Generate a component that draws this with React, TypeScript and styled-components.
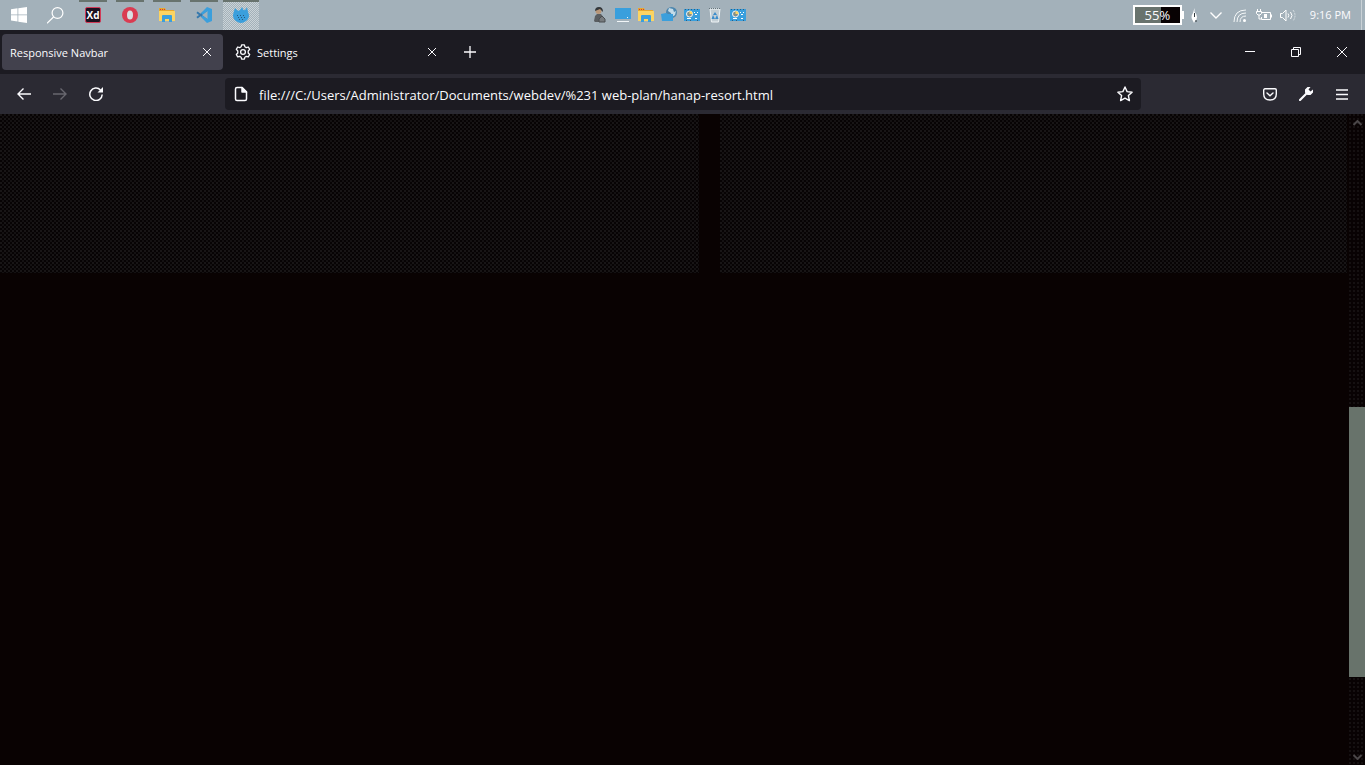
import React from "react";
import styled, { createGlobalStyle, css } from "styled-components";

const GlobalStyle = createGlobalStyle`
  *, *::before, *::after { box-sizing: border-box; }
  html, body { margin: 0; background: #090202; }
  body { font-family: "Open Sans", "Noto Sans", sans-serif; color: #fbfbfe; font-size: 11px; overflow: hidden; }
  button, input { font: inherit; color: inherit; border: 0; padding: 0; margin: 0; background: transparent; }
  svg { display: block; flex: none; }
`;

const Screen = styled.div`
  min-height: 100vh;
  display: flex;
  flex-direction: column;
`;

const Taskbar = styled.header`
  height: 30px;
  display: grid;
  grid-template-columns: 1fr auto 1fr;
  background: #a3b1ba;
`;

const PinnedApps = styled.nav`
  display: flex;
  gap: 1px;
  padding-left: 1px;
`;

const runningMark = "linear-gradient(#68736e, #68736e) center top";
const activeDither = "repeating-conic-gradient(#cbd3d7 0 25%, #a3b1ba 0 50%) 0 0 / 2px 2px";

const AppButton = styled.button<{ $running?: boolean; $active?: boolean }>`
  width: 36px;
  height: 30px;
  display: flex;
  align-items: center;
  justify-content: center;
  ${(p) =>
    p.$running &&
    css`
      background: ${runningMark} / ${p.$active ? "36px" : "28px"} 2px no-repeat
        ${p.$active ? `, ${activeDither}` : ""};
    `}
`;

const XdBadge = styled.span`
  width: 16px;
  height: 16px;
  border: 1px solid #d13b58;
  border-radius: 2px;
  background: #1b1220;
  color: #fff;
  font: bold 10px/14px "Open Sans", sans-serif;
  text-align: center;
`;

const Shortcuts = styled.div`
  display: flex;
  align-items: center;
  gap: 7px;
  margin-right: 28px;
`;

const ShortcutButton = styled.button`
  width: 16px;
  height: 16px;
`;

const Tray = styled.div`
  display: flex;
  align-items: center;
  justify-content: flex-end;
  padding-right: 3px;
`;

const BatteryMeter = styled.div`
  width: 49px;
  height: 20px;
  border: 2px solid #fff;
  outline: 0;
  background: linear-gradient(90deg, #68736e 58%, #080203 58%);
  font-size: 13px;
  line-height: 16px;
  text-align: center;
`;

const BatteryCap = styled.span`
  width: 2px;
  height: 8px;
  background: #fff;
`;

const TrayButton = styled.button<{ $wide?: boolean }>`
  width: ${(p) => (p.$wide ? 24 : 20)}px;
  height: 30px;
  display: flex;
  align-items: center;
  justify-content: center;
`;

const Clock = styled.time`
  padding: 0 10px;
  border-right: 1px solid #c9d1d6;
  line-height: 30px;
  white-space: nowrap;
`;

const TabStrip = styled.div`
  height: 44px;
  display: flex;
  align-items: center;
  padding-left: 2px;
  background: #1c1b22;
`;

const Tab = styled.div<{ $active?: boolean }>`
  width: 221px;
  height: 36px;
  margin-right: 4px;
  padding: 0 8px;
  display: flex;
  align-items: center;
  border-radius: 4px;
  background: ${(p) => (p.$active ? "#42414d" : "transparent")};
`;

const TabTitle = styled.button`
  flex: 1;
  display: flex;
  align-items: center;
  gap: 6px;
  text-align: left;
`;

const TabLabel = styled.span`
  padding-top: 2px;
  line-height: 20px;
`;

const TabClose = styled.button`
  width: 16px;
  height: 16px;
  display: flex;
  align-items: center;
  justify-content: center;
`;

const IconButton = styled.button`
  width: 36px;
  height: 32px;
  display: flex;
  align-items: center;
  justify-content: center;
  &:disabled { color: #68676f; }
`;

const WindowControls = styled.div`
  display: flex;
  margin-left: auto;
`;

const WindowButton = styled.button`
  width: 46px;
  height: 44px;
  display: flex;
  align-items: center;
  justify-content: center;
`;

const Toolbar = styled.div`
  height: 40px;
  display: flex;
  align-items: center;
  padding: 0 5px 0 6px;
  background: #2b2a33;
`;

const AddressBar = styled.label`
  flex: 1;
  height: 32px;
  margin: 0 111px;
  padding: 0 8px;
  display: flex;
  align-items: center;
  gap: 10px;
  border-radius: 4px;
  background: #1c1b22;
`;

const AddressInput = styled.input`
  flex: 1;
  min-width: 0;
  height: 24px;
  padding-top: 1px;
  font-size: 13px;
  outline: 0;
`;

const Viewport = styled.main`
  flex: 1;
  display: flex;
`;

const PageArea = styled.div`
  flex: 1;
  display: grid;
  grid-template-columns: 699fr 627fr;
  gap: 21px;
  align-items: start;
  padding-right: 2px;
`;

const Panel = styled.section`
  height: 159px;
  background:
    linear-gradient(#181516, #181516) 0 0 / 0 0 no-repeat,
    radial-gradient(circle at 1px 1px, #181516 0 1px, transparent 1px) 0 0 / 4px 4px,
    radial-gradient(circle at 1px 1px, #141112 0 1px, transparent 1px) 2px 2px / 4px 4px
    #070304;
`;

const Scrollbar = styled.div`
  width: 16px;
  display: flex;
  flex-direction: column;
  background: radial-gradient(circle at 1px 1px, #151011 0 1px, transparent 1px) 0 0 / 4px 4px #080203;
`;

const ScrollArrow = styled.button`
  width: 16px;
  height: 17px;
  display: flex;
  align-items: center;
  justify-content: center;
  color: #4a4648;
`;

const ScrollSpace = styled.div<{ $share: number }>`
  flex: ${(p) => p.$share} 0 0;
`;

const ScrollThumb = styled(ScrollSpace)`
  background: #68736b;
`;

const CloseIcon = ({ size = 8 }: { size?: number }) => (
  <svg width={size} height={size} viewBox="0 0 8 8" fill="none" stroke="currentColor" strokeWidth={size > 8 ? 0.8 : 1}>
    <path d="M0 0l8 8M8 0L0 8" />
  </svg>
);

const FolderIcon = () => (
  <svg width="16" height="16" viewBox="0 0 16 16">
    <path d="M0 1h6l1 2h8v10H0z" fill="#e6a82d" />
    <path d="M0 4h16v10H0z" fill="#fcd462" />
    <path d="M1 2h1v1H1zM3 2h1v1H3zM5 2h1v1H5z" fill="#d13b38" />
    <path d="M3 15V9q0-1 1-1h8q1 0 1 1v6h-3v-3H6v3z" fill="#3b9fdc" />
  </svg>
);

const ControlPanelIcon = () => (
  <svg width="16" height="16" viewBox="0 0 16 16">
    <path d="M0 2h16v12H0z" fill="#399fdd" />
    <circle cx="5.5" cy="7" r="3" fill="#81908b" stroke="#f2f6f8" />
    <path d="M5.500 4v3h3A3 3 0 0 0 5.500 4" fill="#fcd462" />
    <path d="M10 5h1v1h-1zM13 5h1v1h-1zM11 7h2v1h-2zM3 11h4v1H3zM11 11h2v1h-2z" fill="#fff" />
    <path d="M1 2h1v1H1zM4 2h1v1H4zM7 2h1v1H7zM10 2h1v1h-1zM13 2h1v1h-1zM2 13h1v1H2zM6 13h1v1H6zM13 13h1v1h-1z" fill="#2f5f82" />
  </svg>
);

const App = () => (
  <>
    <GlobalStyle />
    <Screen>
      <Taskbar>
        <PinnedApps aria-label="Taskbar">
          <AppButton aria-label="Start">
            <svg width="16" height="16" viewBox="0 0 16 16" fill="#fff">
              <path d="M0 2.200l6.500-.9v6.200H0zM7.300 1.200L16 0v7.500H7.300zM0 8.300h6.500v6.200L0 13.600zM7.300 8.300H16V16l-8.700-1.300z" />
            </svg>
          </AppButton>
          <AppButton aria-label="Search">
            <svg width="18" height="18" viewBox="0 0 18 18" fill="none" stroke="#fff" strokeWidth="1.200">
              <circle cx="10.500" cy="7" r="5.400" />
              <path d="M6.500 11L0 17.300" />
            </svg>
          </AppButton>
          <AppButton $running aria-label="Adobe XD">
            <XdBadge>Xd</XdBadge>
          </AppButton>
          <AppButton $running aria-label="Opera">
            <svg width="16" height="16" viewBox="0 0 16 16">
              <circle cx="8" cy="8" r="8" fill="#da3b51" />
              <ellipse cx="8" cy="8" rx="3" ry="4.500" fill="#d9dfe3" />
            </svg>
          </AppButton>
          <AppButton $running aria-label="File Explorer">
            <FolderIcon />
          </AppButton>
          <AppButton $running aria-label="Visual Studio Code">
            <svg width="16" height="16" viewBox="0 0 16 16" fill="none">
              <path d="M1 5.300l10.500 8.200M1 10.700L11.500 2.500" stroke="#3478ad" strokeWidth="2" />
              <path d="M11 0l5 2v12l-5 2-6-6 1.500-1.500L11.500 12V4L6.500 7.800 5 6z" fill="#3b9fdc" />
            </svg>
          </AppButton>
          <AppButton $running $active aria-label="Firefox">
            <svg width="16" height="16" viewBox="0 0 16 16">
              <path d="M1 4l1-3 2.500 2.500Q6 4 7 3L9 0l1.500 3q1.500.5 2.500-1l1-2 1 5 1 3q0 4-3 6-5 4-10 0Q0 12 0 8z" fill="#3b9fdc" />
              <path d="M4 8h1v1H4zM7 8h1v1H7zM10 8h1v1h-1zM5 10h1v1H5zM8 10h1v1H8zM11 10h1v1h-1zM6 12h1v1H6zM9 12h1v1H9z" fill="#27577c" />
            </svg>
          </AppButton>
        </PinnedApps>

        <Shortcuts>
          <ShortcutButton aria-label="User folder">
            <svg width="16" height="16" viewBox="0 0 16 16">
              <path d="M2 14l1-5 2-2h4l3 4v4H3z" fill="#5a5e61" />
              <circle cx="6.500" cy="4" r="3" fill="#b89678" />
              <path d="M3 4q0-4 4-4t4 5L8 2z" fill="#34383b" />
              <path d="M7 12l3-3 3 3v3H7z" fill="#777b7e" stroke="#4b4e51" />
            </svg>
          </ShortcutButton>
          <ShortcutButton aria-label="This PC">
            <svg width="16" height="16" viewBox="0 0 16 16">
              <path d="M0 1h16v11H0z" fill="#399fdd" />
              <path d="M2 14h12v1H2zM12 10h1v1h-1z" fill="#f2f6f8" />
            </svg>
          </ShortcutButton>
          <ShortcutButton aria-label="Libraries">
            <FolderIcon />
          </ShortcutButton>
          <ShortcutButton aria-label="Network">
            <svg width="16" height="16" viewBox="0 0 16 16">
              <circle cx="10.500" cy="5.500" r="5.500" fill="#4c86ae" />
              <path d="M8 1l4 1 1 3 2-1-1 4-3 2-1-4-3-2z" fill="#c3dbe8" />
              <path d="M0 7l5-1 2 1h5v7H1z" fill="#3b9fdc" />
            </svg>
          </ShortcutButton>
          <ShortcutButton aria-label="Control Panel">
            <ControlPanelIcon />
          </ShortcutButton>
          <ShortcutButton aria-label="Recycle Bin">
            <svg width="16" height="16" viewBox="0 0 16 16">
              <path d="M3 2h10l-1.500 13h-7z" fill="#c3ced4" stroke="#edf2f4" />
              <path d="M2 1.500h12" stroke="#65747b" strokeDasharray="1 1" />
              <path d="M8 5l2 3H6zM4.500 12l1.500-4 2 4zM11.500 12L10 8l-2 4z" fill="#3b8dcc" />
            </svg>
          </ShortcutButton>
          <ShortcutButton aria-label="System settings">
            <ControlPanelIcon />
          </ShortcutButton>
        </Shortcuts>

        <Tray>
          <BatteryMeter>55%</BatteryMeter>
          <BatteryCap />
          <TrayButton aria-label="Power plan">
            <svg width="6" height="15" viewBox="0 0 6 15">
              <path d="M3.500 0v4Q6 6 6 9q0 3-2 4l-1 2-1-2Q-1 9 2 5z" fill="#fff" />
              <path d="M3.500 5v4M5 12v2" stroke="#30383d" />
            </svg>
          </TrayButton>
          <TrayButton $wide aria-label="Hidden icons">
            <svg width="12" height="7" viewBox="0 0 12 7" fill="none" stroke="#fff" strokeWidth="1.400">
              <path d="M.5.5L6 6 11.500.5" />
            </svg>
          </TrayButton>
          <TrayButton $wide aria-label="Wi-Fi">
            <svg width="13" height="13" viewBox="0 0 13 13" fill="none" stroke="#f4f7f8">
              <path d="M1 13Q1 1 13 1M4 13Q4 4 13 4M7 13Q7 7 13 7" />
              <circle cx="11.500" cy="11.500" r="1.500" fill="#fff" stroke="none" />
            </svg>
          </TrayButton>
          <TrayButton $wide aria-label="Battery charging">
            <svg width="16" height="13" viewBox="0 0 16 13" fill="none" stroke="#fff">
              <path d="M6 3.500h8.500v7h-9V8M15.500 5.500v3" />
              <path d="M8 5h3v4H8z" fill="#fff" stroke="none" />
              <path d="M1.500 0v2M4.500 0v2M.5 2.500h5v2L4 6H2L.5 4.500zM3 6v4h2" />
            </svg>
          </TrayButton>
          <TrayButton $wide aria-label="Volume">
            <svg width="16" height="13" viewBox="0 0 16 13" fill="none" stroke="#fff">
              <path d="M.5 4.500h2L6 1v11L2.500 8.500h-2zM8 4.500q1.500 2 0 4M10.500 3q3 3.500 0 7" />
              <path d="M13 1q4 5.500 0 11" strokeDasharray="2 1" stroke="#d8e0e4" />
            </svg>
          </TrayButton>
          <Clock>9:16 PM</Clock>
        </Tray>
      </Taskbar>

      <TabStrip>
        <Tab $active>
          <TabTitle><TabLabel>Responsive Navbar</TabLabel></TabTitle>
          <TabClose aria-label="Close Responsive Navbar"><CloseIcon /></TabClose>
        </Tab>
        <Tab>
          <TabTitle>
            <svg width="16" height="16" viewBox="0 0 16 16" fill="none" stroke="currentColor" strokeWidth="1.300" strokeLinejoin="round">
              <path d="M6.600.8h2.800l.5 2 1.400.8 2-.6 1.400 2.400L13.200 7v2l1.500 1.500-1.400 2.400-2-.6-1.400.9-.5 2H6.600l-.5-2-1.400-.9-2 .6-1.400-2.400L2.800 9V7L1.300 5.400 2.700 3l2 .6 1.400-.8z" />
              <circle cx="8" cy="8" r="2.400" />
            </svg>
            <TabLabel>Settings</TabLabel>
          </TabTitle>
          <TabClose aria-label="Close Settings"><CloseIcon /></TabClose>
        </Tab>
        <IconButton aria-label="New tab">
          <svg width="12" height="12" viewBox="0 0 12 12" stroke="currentColor" strokeWidth="1.300">
            <path d="M6 0v12M0 6h12" />
          </svg>
        </IconButton>
        <WindowControls>
          <WindowButton aria-label="Minimize">
            <svg width="10" height="10" viewBox="0 0 10 10" stroke="currentColor"><path d="M0 4.500h10" /></svg>
          </WindowButton>
          <WindowButton aria-label="Restore">
            <svg width="10" height="10" viewBox="0 0 10 10" fill="none" stroke="currentColor">
              <path d="M.5 2.500h7v7h-7zM2.500 2.500v-2h7v7h-2" />
            </svg>
          </WindowButton>
          <WindowButton aria-label="Close window"><CloseIcon size={10} /></WindowButton>
        </WindowControls>
      </TabStrip>

      <Toolbar>
        <IconButton aria-label="Back">
          <svg width="14" height="12" viewBox="0 0 14 12" fill="none" stroke="currentColor" strokeWidth="1.400">
            <path d="M14 6H1M6.500.5L1 6l5.500 5.500" />
          </svg>
        </IconButton>
        <IconButton aria-label="Forward" disabled>
          <svg width="14" height="12" viewBox="0 0 14 12" fill="none" stroke="currentColor" strokeWidth="1.400">
            <path d="M0 6h13M7.500.5L13 6l-5.500 5.500" />
          </svg>
        </IconButton>
        <IconButton aria-label="Reload">
          <svg width="14" height="14" viewBox="0 0 14 14" fill="none" stroke="currentColor" strokeWidth="1.500">
            <path d="M11.500 3A6.200 6.200 0 1 0 13.200 7.500" />
            <path d="M14 0v5.500H8.500z" fill="currentColor" stroke="none" />
          </svg>
        </IconButton>
        <AddressBar>
          <svg width="16" height="16" viewBox="0 0 16 16" fill="none" stroke="currentColor" strokeWidth="1.500" strokeLinejoin="round">
            <path d="M4 1.500h5l4.500 4.500v7q0 1.500-1.500 1.500H4q-1.500 0-1.500-1.500V3q0-1.500 1.500-1.500z" />
            <path d="M9 1.500V6h4.500z" fill="currentColor" />
          </svg>
          <AddressInput
            aria-label="Address"
            defaultValue="file:///C:/Users/Administrator/Documents/webdev/%231 web-plan/hanap-resort.html"
          />
          <svg width="16" height="16" viewBox="0 0 16 16" fill="none" stroke="currentColor" strokeWidth="1.400" strokeLinejoin="round">
            <path d="M8 1l2.100 4.600 5 .6-3.700 3.400 1 5L8 12.200l-4.400 2.400 1-5L.9 6.200l5-.6z" />
          </svg>
        </AddressBar>
        <IconButton aria-label="Save to Pocket">
          <svg width="14" height="13" viewBox="0 0 14 13" fill="none" stroke="currentColor" strokeWidth="1.400" strokeLinecap="round">
            <path d="M2 .8h10q1.300 0 1.300 1.300V6q0 6-6.300 6T.7 6V2.100Q.7.800 2 .8z" />
            <path d="M4 5l3 2.700L10 5" />
          </svg>
        </IconButton>
        <IconButton aria-label="Developer tools">
          <svg width="14" height="14" viewBox="0 0 14 14" fill="none" stroke="currentColor">
            <path d="M1 13l7-7" strokeWidth="2.200" strokeLinecap="round" />
            <path d="M6 5.500V2.500L8.500 0h3L9.500 2.500l2 2L14 2.500v3L11.500 8h-3z" fill="currentColor" stroke="none" />
          </svg>
        </IconButton>
        <IconButton aria-label="Menu">
          <svg width="12" height="11" viewBox="0 0 12 11" stroke="currentColor" strokeWidth="1.300">
            <path d="M0 1h12M0 5.500h12M0 10h12" />
          </svg>
        </IconButton>
      </Toolbar>

      <Viewport>
        <PageArea>
          <Panel />
          <Panel />
        </PageArea>
        <Scrollbar>
          <ScrollArrow aria-label="Scroll up">
            <svg width="9" height="6" viewBox="0 0 9 6" fill="none" stroke="currentColor" strokeWidth="2"><path d="M.5 5l4-4 4 4" /></svg>
          </ScrollArrow>
          <ScrollSpace $share={276} />
          <ScrollThumb $share={270} />
          <ScrollSpace $share={71} />
          <ScrollArrow aria-label="Scroll down">
            <svg width="9" height="6" viewBox="0 0 9 6" fill="none" stroke="currentColor" strokeWidth="2"><path d="M.5 1l4 4 4-4" /></svg>
          </ScrollArrow>
        </Scrollbar>
      </Viewport>
    </Screen>
  </>
);

export default App;
